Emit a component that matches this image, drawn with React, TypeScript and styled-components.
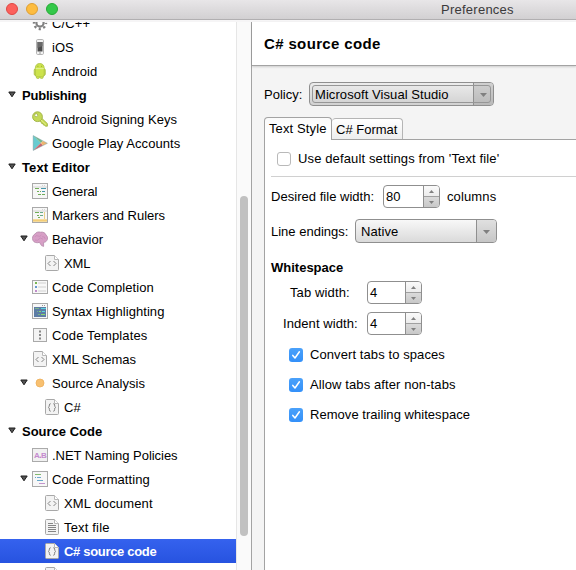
import React from "react";
import styled, { createGlobalStyle, css } from "styled-components";

const GlobalStyle = createGlobalStyle`
  html, body { margin: 0; padding: 0; overflow: hidden; background: #fff; }
  * { box-sizing: border-box; }
  body { font: 13px/15px "Liberation Sans", Arial, sans-serif; color: #000; }
`;

const Window = styled.div`
  display: flex;
  flex-direction: column;
  width: 576px;
  height: 570px;
  overflow: hidden;
`;

const TitleBar = styled.header`
  display: flex;
  align-items: center;
  flex: none;
  height: 20px;
  padding: 0 0 1px 6px;
  background: linear-gradient(#e8e6e8, #d2d0d2);
  border-bottom: 1px solid #b1afb1;
`;

const Light = styled.span<{ $fill: string; $edge: string }>`
  width: 12px;
  height: 12px;
  margin-right: 8px;
  border-radius: 50%;
  background: ${(p) => p.$fill};
  border: 1px solid ${(p) => p.$edge};
`;

const Title = styled.span`
  margin-left: 375px;
  color: #3b3a3b;
  letter-spacing: 0.25px;
`;

const Body = styled.div`
  display: flex;
  flex: 1;
  min-height: 0;
  border-top: 2px solid #f6f5f6;
`;

const Sidebar = styled.nav`
  width: 236px;
  flex: none;
  overflow: hidden;
  background: #fff;
`;

const Tree = styled.ul`
  list-style: none;
  margin: -11px 0 0;
  padding: 0;
`;

const Row = styled.li<{ $level: number; $selected?: boolean }>`
  display: flex;
  align-items: center;
  height: 24px;
  padding-left: ${(p) => 4 + p.$level * 12}px;
  white-space: nowrap;
  ${(p) =>
    p.$level === 0 &&
    css`
      font-weight: bold;
    `}
  ${(p) =>
    p.$selected &&
    css`
      color: #fff;
      font-weight: bold;
      background: linear-gradient(#3562ee, #2753e0);
    `}
`;

const ExpanderBox = styled.span`
  display: flex;
  width: 16px;
  height: 24px;
  flex: none;
  padding: 8px 0 0 4px;
`;

const IconBox = styled.span`
  display: flex;
  width: 16px;
  height: 16px;
  margin-right: 4px;
  flex: none;
`;

const Label = styled.span<{ $track?: number; $indent?: number }>`
  letter-spacing: ${(p) => p.$track ?? 0}px;
  margin-left: ${(p) => p.$indent ?? 0}px;
  white-space: nowrap;
`;

const ScrollTrack = styled.div`
  width: 15px;
  flex: none;
  padding: 174px 0 0 3px;
  background: #fafafa;
  border-left: 1px solid #e6e6e6;
`;

const ScrollThumb = styled.div`
  width: 8px;
  height: 340px;
  border-radius: 4px;
  background: #c1c1c1;
`;

const Content = styled.main`
  display: flex;
  flex-direction: column;
  flex: 1;
  min-width: 0;
  background: #f4f4f4;
  border-left: 1px solid #a3a3a3;
`;

const Heading = styled.h1`
  height: 44px;
  flex: none;
  margin: 0;
  padding: 13px 0 0 12px;
  background: #fff;
  border-bottom: 1px solid #a3a3a3;
  box-shadow: 0 1px 2px rgba(0, 0, 0, 0.16);
  font-size: 15px;
  line-height: 18px;
  letter-spacing: 0.36px;
`;

const PolicyRow = styled.div`
  display: flex;
  align-items: center;
  height: 24px;
  margin: 16px 0 0 12px;
`;

const ComboFrame = styled.div<{ $width: number; $focused?: boolean }>`
  display: flex;
  flex: none;
  position: relative;
  width: ${(p) => p.$width}px;
  height: 24px;
  margin-left: auto;
  overflow: hidden;
  border: 1px solid #8f8f8f;
  border-radius: 4px;
  background: ${(p) => (p.$focused ? "linear-gradient(#ececec, #d1d1d1)" : "linear-gradient(#f8f8f8, #dadada)")};
`;

const FocusRing = styled.span`
  position: absolute;
  inset: 2px;
  border: 1px solid #969696;
  border-radius: 3px;
`;

const ComboText = styled.span<{ $track: number }>`
  flex: 1;
  padding: 4px 0 0 5px;
  white-space: nowrap;
  letter-spacing: ${(p) => p.$track}px;
`;

const ComboArrow = styled.span<{ $focused?: boolean }>`
  display: flex;
  align-items: center;
  justify-content: center;
  width: 20px;
  padding-top: 2px;
  border-left: 1px solid #8f8f8f;
  background: ${(p) => (p.$focused ? "linear-gradient(#d0d0d0, #b9b9b9)" : "linear-gradient(#e0e0e0, #c6c6c6)")};
`;

const TabStrip = styled.div`
  display: flex;
  align-items: flex-end;
  height: 23px;
  margin: 11px 0 0 12px;
`;

const Tab = styled.div<{ $active?: boolean }>`
  flex: none;
  white-space: nowrap;
  border: 1px solid ${(p) => (p.$active ? "#a3a3a3" : "#b5b5b5")};
  border-bottom: 0;
  border-radius: 4px 4px 0 0;
  ${(p) =>
    p.$active
      ? css`
          width: 68px;
          height: 23px;
          padding: 3px 0 0 4px;
          background: linear-gradient(#fafafa, #fff 60%);
          letter-spacing: 0.12px;
        `
      : css`
          width: 71px;
          height: 21px;
          padding: 3px 0 0 4px;
          border-left: 0;
          background: linear-gradient(#fff, #eee);
          letter-spacing: 0;
        `}
`;

const TabGroup = styled.div`
  display: flex;
  align-items: flex-end;
  flex: 1;
  height: 23px;
  border-bottom: 1px solid #a3a3a3;
`;

const Panel = styled.section`
  display: flex;
  flex-direction: column;
  flex: 1;
  margin-left: 12px;
  padding-left: 6px;
  background: #fff;
  border-left: 1px solid #a3a3a3;
`;

const Field = styled.div<{ $top: number; $left?: number; $height?: number; $labelWidth?: number }>`
  display: flex;
  align-items: center;
  flex: none;
  height: ${(p) => p.$height ?? 23}px;
  margin: ${(p) => p.$top}px 0 0 ${(p) => p.$left ?? 0}px;
`;

const Caption = styled.label<{ $width: number; $track?: number }>`
  width: ${(p) => p.$width}px;
  flex: none;
  letter-spacing: ${(p) => p.$track ?? 0}px;
  white-space: nowrap;
`;

const Control = styled.div`
  display: flex;
  flex: none;
`;

const Check = styled.span<{ $on?: boolean }>`
  display: flex;
  width: 14px;
  height: 14px;
  flex: none;
  border-radius: 3px;
  ${(p) =>
    p.$on
      ? css`
          background: linear-gradient(#4aa1fa, #3390f9);
        `
      : css`
          background: #fff;
          border: 1px solid #b9b9b9;
        `}
`;

const Divider = styled.hr`
  width: 100%;
  height: 1px;
  margin: 10px 0 0;
  border: 0;
  flex: none;
  background: #d0d0d0;
`;

const SectionTitle = styled.h2`
  margin: 17px 0 0;
  font-size: 13px;
  line-height: 15px;
  letter-spacing: 0;
`;

const SpinFrame = styled.div<{ $width: number }>`
  display: flex;
  width: ${(p) => p.$width}px;
  height: 23px;
  flex: none;
  overflow: hidden;
  border: 1px solid #8f8f8f;
  border-radius: 4px;
  background: #fff;
`;

const SpinValue = styled.span`
  flex: 1;
  padding: 3px 0 0 2px;
`;

const SpinButtons = styled.span`
  display: grid;
  grid-template-rows: 10px 11px;
  width: 16px;
  border-left: 1px solid #8f8f8f;
`;

const SpinButton = styled.span<{ $down?: boolean }>`
  display: flex;
  align-items: center;
  justify-content: center;
  background: ${(p) => (p.$down ? "linear-gradient(#dadada, #c8c8c8)" : "linear-gradient(#fafafa, #ececec)")};
  border-top: ${(p) => (p.$down ? "1px solid #a0a0a0" : "0")};
`;

const Triangle = ({ up, w = 6, h = 4 }: { up?: boolean; w?: number; h?: number }) => (
  <svg width={w} height={h} viewBox="0 0 6 4" preserveAspectRatio="none">
    <path d={up ? "M0 4 3 0 6 4Z" : "M0 0 3 4 6 0Z"} fill="#808080" />
  </svg>
);

const Expander = () => (
  <svg width="8" height="7" viewBox="0 0 8 7">
    <path d="M.8 1h6.4L4 5.8Z" fill="#555" stroke="#1c1c1c" strokeWidth="1" strokeLinejoin="round" />
  </svg>
);

const Combo = ({ text, width, track = 0, focused }: { text: string; width: number; track?: number; focused?: boolean }) => (
  <Control>
    <ComboFrame $width={width} $focused={focused}>
      <ComboText $track={track}>{text}</ComboText>
      <ComboArrow $focused={focused}>
        <Triangle w={7} h={4} />
      </ComboArrow>
      {focused && <FocusRing />}
    </ComboFrame>
  </Control>
);

const Spin = ({ value, width }: { value: string; width: number }) => (
  <SpinFrame $width={width}>
    <SpinValue>{value}</SpinValue>
    <SpinButtons>
      <SpinButton><Triangle up w={5} h={3} /></SpinButton>
      <SpinButton $down><Triangle w={5} h={3} /></SpinButton>
    </SpinButtons>
  </SpinFrame>
);

const CheckMark = () => (
  <svg width="14" height="14" viewBox="0 0 14 14">
    <path d="M3.8 7.4 6 10 10.4 3.8" fill="none" stroke="#fff" strokeWidth="1.5" strokeLinecap="round" strokeLinejoin="round" />
  </svg>
);

type IconName =
  | "gear" | "phone" | "android" | "key" | "play" | "general" | "markers" | "brain" | "xml"
  | "completion" | "syntax" | "templates" | "dot" | "braces" | "naming" | "formatting" | "text" | "page";

const Frame = ({ fill = "#f7f7f7" }: { fill?: string }) => (
  <rect x=".5" y=".5" width="15" height="15" fill={fill} stroke="#a9a9a9" />
);

const Page = () => (
  <>
    <path d="M1.5 1.5q0-1 1-1H10.5L14.5 4.5V14.5q0 1-1 1H2.5q-1 0-1-1Z" fill="#f3f3f3" stroke="#a8a8a8" />
    <path d="M10.5.5V4.5H14.5" fill="#fff" stroke="#b8b8b8" />
  </>
);

const drawings: Record<IconName, React.ReactNode> = {
  gear: (
    <g fill="none" stroke="#808080">
      <circle cx="8" cy="8" r="3.6" strokeWidth="2.2" />
      <circle cx="8" cy="8" r="6" strokeWidth="2.4" strokeDasharray="2.2 2.512" strokeDashoffset="1.1" />
    </g>
  ),
  phone: (
    <>
      <rect x="4.5" y=".5" width="7" height="15" rx="1.2" fill="#f3f3f3" stroke="#b4b4b4" />
      <rect x="5.5" y="3" width="5" height="9.5" fill="#4c4c4c" />
      <path d="M5.5 3H10.5V7L5.5 9Z" fill="#6a6a6a" />
      <path d="M7 14H9" stroke="#999" />
    </>
  ),
  android: (
    <g fill="#cde34c" stroke="#a9bf45" strokeWidth=".8">
      <rect x="4.3" y="10" width="3.2" height="5.5" rx="1.4" />
      <rect x="8" y="10" width="3.2" height="5.5" rx="1.4" />
      <rect x="2.2" y="5.8" width="2.6" height="6.6" rx="1.3" />
      <rect x="10.7" y="5.8" width="2.6" height="6.6" rx="1.3" />
      <path d="M3.3 5.4C3.3 2 5.2.5 7.75.5S12.2 2 12.2 5.4V12q0 1.4-1.3 1.4H4.6q-1.3 0-1.3-1.4Z" />
      <path d="M4.6 12.6h6.3" stroke="#cde34c" strokeWidth="1.6" />
      <path d="M3.7 5.6H11.8" stroke="#e9f6a6" />
      <path d="M5.4 3.3h1M9.1 3.3h1" stroke="#7f972b" />
    </g>
  ),
  key: (
    <>
      <path d="M7 9.5 9.5 7 15.4 12.6V15.2H13.4L12.6 14.2 11.4 14 11 12.6 9.6 12.4 9.2 11.2Z" fill="#c9dc53" stroke="#9bad42" strokeWidth=".8" />
      <circle cx="5.5" cy="5.7" r="4.9" fill="#c4d957" stroke="#9eb043" strokeWidth=".9" />
      <path d="M8.8 8.8 14 13.6" stroke="#e0ee8c" />
      <circle cx="4.2" cy="4.2" r="1.5" fill="#fff" stroke="#97a83f" strokeWidth=".7" />
    </>
  ),
  play: (
    <>
      <path d="M1.2.6 8.8 8 1.2 15.4Z" fill="#67cbd0" />
      <path d="M1.2.6 10.9 5.9 8.8 8Z" fill="#72b98e" />
      <path d="M1.2 15.4 8.8 8 10.9 10.5Z" fill="#c96770" />
      <path d="M10.9 5.9 15.4 8.3 10.9 10.6 8.8 8Z" fill="#efb56f" />
      <path d="M1.2.6 15.4 8.3 1.2 15.4Z" fill="none" stroke="#70979b" strokeOpacity=".65" strokeWidth=".7" />
    </>
  ),
  general: (
    <>
      <Frame />
      <path d="M10 2.5h1M12 2.5h1M1 4H15" stroke="#d4d4d4" />
      <path d="M3 5.5H7M8 8.5H9M6 11.5H9" stroke="#71ad58" />
      <path d="M9 5.5H14M10 8.5H13" stroke="#4797ab" />
      <path d="M5 8.5H7M10 11.5H13" stroke="#71ad58" />
    </>
  ),
  markers: (
    <>
      <Frame />
      <path d="M10 2.5h1M12 2.5h1M1 4H15" stroke="#d4d4d4" />
      <path d="M3 5.5H7M5 8.5H7M6 10.5H8" stroke="#71ad58" />
      <path d="M8 5.5H11M8 8.5H11" stroke="#67a985" />
      <path d="M12.5 5V12" stroke="#e8cf8a" />
      <path d="M1 13.5H15" stroke="#f3cd76" strokeWidth="2.4" />
    </>
  ),
  brain: (
    <>
      <path d="M1 9.5C-.2 7 .7 4.2 3 3 4 1 7 .6 8.5 1.2 11 .6 13.4 2 14 4 16 5.5 16 8.2 14.6 9.8 13.8 11.2 12.5 11.3 11.6 11.4L11.6 15.4 9.5 14.6 7.5 11.4C4.5 12.2 2 11.5 1 9.5Z" fill="#d79fc6" stroke="#b48aaa" strokeWidth=".8" />
      <path d="M2.8 6Q4 3.7 6 5T9.3 4M3 9Q6 10 7 8T11 8.2M10 5.7Q13 5 13.2 8" fill="none" stroke="#c68cb7" strokeWidth=".8" />
    </>
  ),
  xml: (
    <>
      <Page />
      <path d="M6.5 6 4 8.5 6.5 11M9.5 6 12 8.5 9.5 11" fill="none" stroke="#777" strokeWidth=".9" />
    </>
  ),
  completion: (
    <>
      <rect x=".5" y="1.5" width="15" height="13" fill="#f8f8f8" stroke="#a9a9a9" />
      <path d="M6 4H14M6 8H14M6 12H14" stroke="#e4e4e4" strokeWidth="2" />
      <path d="M3 4h2" stroke="#78b652" strokeWidth="2" />
      <path d="M3 8h2" stroke="#6698cf" strokeWidth="2" />
      <path d="M3 12h2" stroke="#c08bcb" strokeWidth="2" />
    </>
  ),
  syntax: (
    <>
      <Frame />
      <path d="M10 2.5h1M12 2.5h1" stroke="#999" />
      <rect x="2" y="4" width="12" height="10" fill="#5d7da5" />
      <path d="M3 5.5H7M5 8.5H6M6 11.5H8" stroke="#79b38b" />
      <path d="M9 5.5H14M10 8.5H13" stroke="#5bd3e0" />
      <path d="M7 8.5H9M9 11.5H13" stroke="#8fd86a" />
    </>
  ),
  templates: (
    <>
      <rect x="1.5" y="1.5" width="13" height="13" fill="#f3f3f3" stroke="#a9a9a9" />
      <path d="M7 4.5h2M7 8h2M7 11.5h2" stroke="#888" strokeWidth="2" />
    </>
  ),
  dot: <circle cx="8" cy="8" r="4" fill="#f8c070" stroke="#eeb05c" strokeWidth=".8" />,
  braces: (
    <>
      <Page />
      <path d="M6.7 4.7Q5.4 4.7 5.4 6T4.5 8.5Q5.4 8.6 5.4 10.5T6.7 12.3M9.3 4.7Q10.6 4.7 10.6 6T11.5 8.5Q10.6 8.6 10.6 10.5T9.3 12.3" fill="none" stroke="#777" strokeWidth=".9" />
    </>
  ),
  naming: (
    <>
      <rect x=".5" y="1.5" width="15" height="13" fill="#f1f1f1" stroke="#aaa" />
      <text x="2" y="11" fontSize="8" fontWeight="bold" fontFamily="Liberation Sans" fill="#c48ace">A</text>
      <rect x="7.6" y="9.6" width="1.4" height="1.4" fill="#c48ace" />
      <text x="9" y="11" fontSize="8" fontWeight="bold" fontFamily="Liberation Sans" fill="#c48ace">B</text>
    </>
  ),
  formatting: (
    <>
      <Frame />
      <path d="M3 3.5H9" stroke="#83ba70" />
      <path d="M3 6.5H4M5 9.5H11" stroke="#66a7c7" />
      <path d="M5 6.5H9" stroke="#6fa9d0" />
      <path d="M7 12.5H13" stroke="#c395ce" />
    </>
  ),
  text: (
    <>
      <Page />
      <path d="M4 4.5H9M4 6.5H12M4 8.5H12M4 10.5H12M4 12.5H12" stroke="#858585" />
    </>
  ),
  page: <Page />,
};

const Icon = ({ name }: { name: IconName }) => (
  <IconBox>
    <svg width="16" height="16" viewBox="0 0 16 16">{drawings[name]}</svg>
  </IconBox>
);

interface Item {
  label: string;
  level: number;
  icon?: IconName;
  open?: boolean;
  selected?: boolean;
  track?: number;
}

const items: Item[] = [
  { label: "C/C++", level: 1, icon: "gear", track: 0.1 },
  { label: "iOS", level: 1, icon: "phone" },
  { label: "Android", level: 1, icon: "android", track: 0.06 },
  { label: "Publishing", level: 0, open: true, track: -0.2 },
  { label: "Android Signing Keys", level: 1, icon: "key", track: 0.04 },
  { label: "Google Play Accounts", level: 1, icon: "play", track: 0.05 },
  { label: "Text Editor", level: 0, open: true, track: 0.1 },
  { label: "General", level: 1, icon: "general", track: -0.15 },
  { label: "Markers and Rulers", level: 1, icon: "markers", track: -0.02 },
  { label: "Behavior", level: 1, icon: "brain", open: true, track: -0.05 },
  { label: "XML", level: 2, icon: "xml", track: -0.1 },
  { label: "Code Completion", level: 1, icon: "completion", track: 0.1 },
  { label: "Syntax Highlighting", level: 1, icon: "syntax", track: 0.06 },
  { label: "Code Templates", level: 1, icon: "templates", track: 0.12 },
  { label: "XML Schemas", level: 1, icon: "xml" },
  { label: "Source Analysis", level: 1, icon: "dot", open: true, track: 0.03 },
  { label: "C#", level: 2, icon: "braces" },
  { label: "Source Code", level: 0, open: true },
  { label: ".NET Naming Policies", level: 1, icon: "naming", track: -0.03 },
  { label: "Code Formatting", level: 1, icon: "formatting", open: true, track: 0.06 },
  { label: "XML document", level: 2, icon: "xml", track: 0.14 },
  { label: "Text file", level: 2, icon: "text", track: 0.17 },
  { label: "C# source code", level: 2, icon: "braces", selected: true, track: -0.32 },
  { label: "", level: 2, icon: "page" },
];

const options = [
  { label: "Convert tabs to spaces", track: 0.09 },
  { label: "Allow tabs after non-tabs", track: 0.1 },
  { label: "Remove trailing whitespace", track: 0.04 },
];

export default function App() {
  return (
    <>
      <GlobalStyle />
      <Window>
        <TitleBar>
          <Light $fill="#fc605c" $edge="#df4744" />
          <Light $fill="#fdbc40" $edge="#de9f34" />
          <Light $fill="#34c84a" $edge="#27aa35" />
          <Title>Preferences</Title>
        </TitleBar>
        <Body>
          <Sidebar>
            <Tree>
              {items.map((item, i) => (
                <Row key={i} $level={item.level} $selected={item.selected}>
                  <ExpanderBox>{item.open && <Expander />}</ExpanderBox>
                  {item.icon && <Icon name={item.icon} />}
                  <Label $track={item.track} $indent={item.level === 0 ? 2 : 0}>{item.label}</Label>
                </Row>
              ))}
            </Tree>
          </Sidebar>
          <ScrollTrack><ScrollThumb /></ScrollTrack>
          <Content>
            <Heading>C# source code</Heading>
            <PolicyRow>
              <Caption $width={45}>Policy:</Caption>
              <Combo text="Microsoft Visual Studio" width={185} track={0.07} focused />
            </PolicyRow>
            <TabStrip>
              <Tab $active>Text Style</Tab>
              <TabGroup>
                <Tab>C# Format</Tab>
              </TabGroup>
            </TabStrip>
            <Panel>
              <Field $top={11} $left={6} $height={15}>
                <Check />
                <Label $indent={7} $track={0.13}>Use default settings from 'Text file'</Label>
              </Field>
              <Divider />
              <Field $top={8}>
                <Caption $width={112} $track={0.03}>Desired file width:</Caption>
                <Spin value="80" width={57} />
                <Label $indent={7} $track={0.12}>columns</Label>
              </Field>
              <Field $top={11} $height={24}>
                <Caption $width={84}>Line endings:</Caption>
                <Combo text="Native" width={142} track={0.1} />
              </Field>
              <SectionTitle>Whitespace</SectionTitle>
              <Field $top={6} $left={19}>
                <Caption $width={77} $track={0.12}>Tab width:</Caption>
                <Spin value="4" width={55} />
              </Field>
              <Field $top={8} $left={12}>
                <Caption $width={84} $track={0.08}>Indent width:</Caption>
                <Spin value="4" width={55} />
              </Field>
              {options.map((option, i) => (
                <Field key={option.label} $top={i === 0 ? 12 : 15} $left={18} $height={15}>
                  <Check $on><CheckMark /></Check>
                  <Label $indent={7} $track={option.track}>{option.label}</Label>
                </Field>
              ))}
            </Panel>
          </Content>
        </Body>
      </Window>
    </>
  );
}
